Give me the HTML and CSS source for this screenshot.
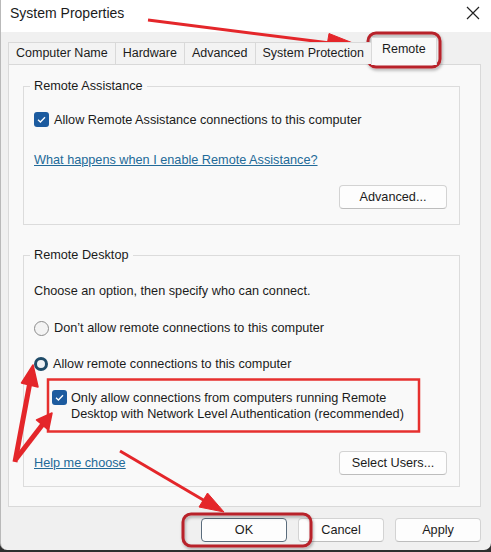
FILE: index.html
```html
<!DOCTYPE html>
<html lang="en">
<head>
  <meta charset="UTF-8">
  <meta name="viewport" content="width=device-width, initial-scale=1.0">
  <title>System Properties</title>
  <link rel="stylesheet" href="styles.css">
</head>
<body>
  <div class="window">
    <div class="titlebar">
      <span class="title">System Properties</span>
      <svg class="close" width="14" height="14" viewBox="0 0 14 14">
        <path d="M1 1 L13 13 M13 1 L1 13" stroke="#222" stroke-width="1.2" fill="none"/>
      </svg>
    </div>

    <div class="content">
      <div class="tabs">
        <div class="tab">Computer Name</div>
        <div class="tab">Hardware</div>
        <div class="tab">Advanced</div>
        <div class="tab">System Protection</div>
        <div class="tab selected">Remote</div>
      </div>

      <div class="panel">
        <div class="group assist">
          <span class="legend">Remote Assistance</span>
          <div class="option first">
            <span class="checkbox"><svg width="15" height="15" viewBox="0 0 15 15"><path d="M4 7.8 L6.4 10 L11 5.2" stroke="#fff" stroke-width="1.3" fill="none"/></svg></span>
            <span>Allow Remote Assistance connections to this computer</span>
          </div>
          <a class="link what" href="#">What happens when I enable Remote Assistance?</a>
          <div class="row right">
            <button class="btn wide">Advanced...</button>
          </div>
        </div>

        <div class="group desktop">
          <span class="legend">Remote Desktop</span>
          <div class="note">Choose an option, then specify who can connect.</div>
          <div class="option radio-row">
            <span class="radio"></span>
            <span>Don’t allow remote connections to this computer</span>
          </div>
          <div class="option radio-row second">
            <span class="radio on"></span>
            <span>Allow remote connections to this computer</span>
          </div>
          <div class="option nla">
            <span class="checkbox"><svg width="15" height="15" viewBox="0 0 15 15"><path d="M4 7.8 L6.4 10 L11 5.2" stroke="#fff" stroke-width="1.3" fill="none"/></svg></span>
            <span>Only allow connections from computers running Remote<br>Desktop with Network Level Authentication (recommended)</span>
          </div>
          <div class="row split">
            <a class="link" href="#">Help me choose</a>
            <button class="btn wide">Select Users...</button>
          </div>
        </div>
      </div>

      <div class="footer">
        <button class="btn default">OK</button>
        <button class="btn">Cancel</button>
        <button class="btn">Apply</button>
      </div>
    </div>

    <!-- red annotations drawn on top of the screenshot -->
    <svg class="marks" width="491" height="552" viewBox="0 0 491 552">
      <defs>
        <filter id="shade" x="-20%" y="-40%" width="140%" height="180%">
          <feDropShadow dx="1" dy="2" stdDeviation="1.5" flood-color="#000" flood-opacity="0.3"/>
        </filter>
      </defs>
      <rect x="368" y="33" width="72" height="34" rx="8" fill="none" stroke="#b8222b" stroke-width="3" filter="url(#shade)"/>
      <rect x="183" y="514" width="128" height="32" rx="8" fill="none" stroke="#b8222b" stroke-width="3" filter="url(#shade)"/>
      <rect x="48" y="379.5" width="371" height="52" fill="none" stroke="#e6302f" stroke-width="2.5"/>

      <g fill="#e4262a" stroke="#e4262a" stroke-linejoin="round">
        <line x1="148" y1="20" x2="330" y2="43" stroke-width="3"/>
        <polygon points="363,47 326,51.5 329,33.5" stroke-width="1"/>

        <line x1="120" y1="451" x2="205" y2="501" stroke-width="3"/>
        <polygon points="224,512 199,507 207.5,493" stroke-width="1"/>

        <line x1="15" y1="462" x2="30" y2="382" stroke-width="5"/>
        <polygon points="33,365 38,387 21.5,383" stroke-width="1.5"/>

        <line x1="16" y1="459" x2="43" y2="424" stroke-width="5"/>
        <polygon points="52,413 48.5,430 36.5,420" stroke-width="1.5"/>
      </g>
    </svg>
  </div>
</body>
</html>
```

FILE: styles.css
```css
body, html {
    margin: 0;
    padding: 0;
  }
  body {
    font-family: "Liberation Sans", Arial, sans-serif;
    font-size: 12.7px;
    color: #1b1b1b;
    background-color: #2e2e2e;
    overflow: hidden;
  }
  .window {
    position: relative;
    width: 491px;
    height: 550px;
    background-color: #f0f0f0;
    border-radius: 0 0 7px 7px;
    box-sizing: border-box;
    border-left: 1px solid #b9b9b9;
    overflow: hidden;
  }
  .titlebar {
    height: 32px;
    background-color: #fff;
    display: flex;
    justify-content: space-between;
    align-items: flex-start;
    padding: 4px 11px 0 9px;
    box-sizing: border-box;
  }
  .title {
    font-size: 14px;
    line-height: 18px;
  }
  .close {
    margin-top: 2px;
  }
  .content {
    padding: 0 10px 0 7px;
  }

  /* tab strip */
  .tabs {
    display: flex;
    align-items: flex-end;
    height: 32px;
    position: relative;
    z-index: 1;
  }
  .tab {
    height: 21px;
    line-height: 21px;
    padding: 0 7px;
    border: 1px solid #d9d9d9;
    border-bottom: none;
    border-right: none;
    background-color: #f3f3f3;
    font-size: 12.5px;
  }
  .tab.selected {
    height: 27px;
    line-height: 23px;
    margin-bottom: -1px;
    padding: 0 10px;
    border-right: 1px solid #d9d9d9;
    background-color: #f9f9f9;
  }

  .panel {
    height: 443px;
    box-sizing: border-box;
    background-color: #f9f9f9;
    border: 1px solid #d9d9d9;
    padding: 21px 20px 0 14px;
  }
  .group {
    border: 1px solid #dcdcdc;
    padding: 0 12px 0 10px;
  }
  .group.assist {
    height: 137px;
  }
  .group.desktop {
    height: 230px;
    margin-top: 30px;
  }
  .legend {
    display: block;
    width: max-content;
    height: 16px;
    line-height: 16px;
    margin: -9px 0 0 -4px;
    padding: 0 4px;
    background-color: #f9f9f9;
  }

  .option {
    display: flex;
    align-items: flex-start;
    gap: 5px;
    line-height: 16px;
  }
  .option.first {
    margin-top: 18px;
  }
  .checkbox {
    width: 15px;
    height: 15px;
    flex: none;
    border-radius: 3px;
    background-color: #1c5b9f;
    display: flex;
  }
  .radio {
    width: 13px;
    height: 13px;
    flex: none;
    border-radius: 50%;
    border: 1px solid #8c8c8c;
    background-color: #f3f3f3;
    margin-top: 1px;
  }
  .radio.on {
    width: 8px;
    height: 8px;
    border: 3.5px solid #1f4b68;
    background-color: #eef2f5;
  }

  .link {
    display: block;
    width: max-content;
    color: #226a98;
    line-height: 16px;
  }
  .link.what {
    margin-top: 24px;
  }
  .row {
    display: flex;
    align-items: center;
  }
  .row.right {
    justify-content: flex-end;
    margin-top: 17px;
  }
  .row.split {
    justify-content: space-between;
    margin-top: 29px;
  }

  .note {
    margin-top: 20px;
    line-height: 16px;
  }
  .radio-row {
    margin-top: 21px;
  }
  .radio-row.second {
    margin-top: 20px;
  }
  .nla {
    margin: 18px 0 0 18px;
    gap: 4px;
  }

  .btn {
    font-family: inherit;
    font-size: 12.7px;
    color: #1b1b1b;
    height: 24px;
    width: 86px;
    background-color: #fdfdfd;
    border: 1px solid #d3d3d3;
    border-bottom-color: #bdbdbd;
    border-radius: 4px;
    padding: 0;
  }
  .btn.wide {
    width: 108px;
  }
  .btn.default {
    border: 1px solid #5a6c7c;
    box-shadow: inset 0 0 0 1px #fff;
  }
  .footer {
    display: flex;
    justify-content: flex-end;
    gap: 11px;
    margin-top: 11px;
  }

  .marks {
    position: absolute;
    left: -1px;
    top: 0;
    pointer-events: none;
  }
```
